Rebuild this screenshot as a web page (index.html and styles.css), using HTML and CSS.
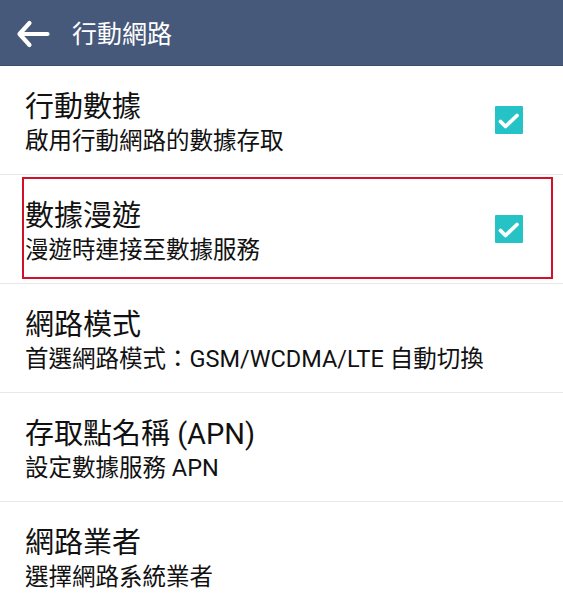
FILE: index.html
```html
<!DOCTYPE html>
<html lang="zh-Hant">
<head>
<meta charset="utf-8">
<title>行動網路</title>
<link rel="stylesheet" href="styles.css">
</head>
<body>
<header class="appbar">
  <svg class="back" width="34" height="28" viewBox="0 0 34 28" aria-hidden="true">
    <path d="M31.5 14 H4.5 M13.5 3 L3.5 14 L13.5 25" fill="none" stroke="#fff" stroke-width="4.2" stroke-linecap="round" stroke-linejoin="round"/>
  </svg>
  <h1 class="appbar-title">行動網路</h1>
</header>
<ul class="list">
  <li class="row">
    <div class="texts">
      <div class="title">行動數據</div>
      <div class="sub">啟用行動網路的數據存取</div>
    </div>
    <span class="check">
      <svg width="28" height="28" viewBox="0 0 28 28" aria-hidden="true"><path d="M5.5 15.5 L10.5 20.5 L22 9.5" fill="none" stroke="#fff" stroke-width="3.8" stroke-linecap="round" stroke-linejoin="round"/></svg>
    </span>
  </li>
  <li class="row">
    <div class="texts">
      <div class="title">數據漫遊</div>
      <div class="sub">漫遊時連接至數據服務</div>
    </div>
    <span class="check">
      <svg width="28" height="28" viewBox="0 0 28 28" aria-hidden="true"><path d="M5.5 15.5 L10.5 20.5 L22 9.5" fill="none" stroke="#fff" stroke-width="3.8" stroke-linecap="round" stroke-linejoin="round"/></svg>
    </span>
    <span class="highlight"></span>
  </li>
  <li class="row">
    <div class="texts">
      <div class="title">網路模式</div>
      <div class="sub">首選網路模式：GSM/WCDMA/LTE 自動切換</div>
    </div>
  </li>
  <li class="row">
    <div class="texts">
      <div class="title">存取點名稱 (APN)</div>
      <div class="sub">設定數據服務 APN</div>
    </div>
  </li>
  <li class="row">
    <div class="texts">
      <div class="title">網路業者</div>
      <div class="sub">選擇網路系統業者</div>
    </div>
  </li>
</ul>
</body>
</html>
```

FILE: styles.css
```css
* { box-sizing: border-box; }
html, body {
  margin: 0;
  padding: 0;
  background: #ffffff;
}
body {
  font-family: Roboto, "Noto Sans CJK TC", sans-serif;
  color: #111111;
  overflow: hidden;
}
.appbar {
  height: 66px;
  background: #46597a;
  border-bottom: 1px solid #3c4d6a;
  display: flex;
  align-items: center;
  padding-left: 16px;
  gap: 22px;
}
.back {
  display: block;
  flex: none;
  margin-top: 2px;
}
.appbar-title {
  margin: 0;
  font-size: 25px;
  font-weight: 400;
  color: #ffffff;
  line-height: 1;
  margin-top: 3px;
}
.list {
  list-style: none;
  margin: 0;
  padding: 0;
}
.row {
  position: relative;
  height: 109px;
  border-bottom: 1px solid #e8e8e8;
  display: flex;
  align-items: center;
  padding-left: 25px;
  padding-right: 40px;
}
.texts {
  flex: 1;
  display: flex;
  flex-direction: column;
  gap: 2px;
  margin-top: 6px;
}
.title {
  font-size: 29px;
  line-height: 34px;
}
.sub {
  font-size: 23.5px;
  line-height: 30px;
}
.check {
  width: 28px;
  height: 28px;
  background: #25c3c6;
  border-radius: 1px;
  display: block;
  flex: none;
}
.check svg { display: block; }
.highlight {
  position: absolute;
  top: 2px;
  left: 22px;
  right: 10px;
  bottom: 4px;
  border: 2px solid #d3102a;
  pointer-events: none;
}
```
